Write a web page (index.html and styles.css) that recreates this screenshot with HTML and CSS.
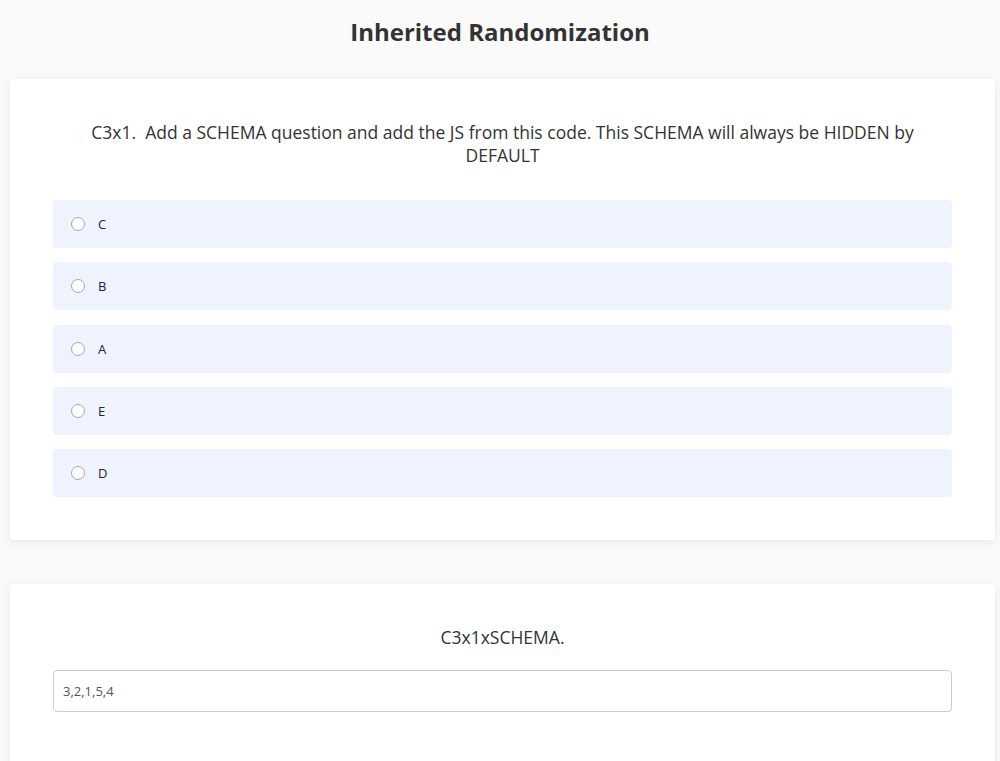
FILE: index.html
```html
<!DOCTYPE html>
<html>
<head>
	<title>Inherited Randomization</title>
	<link rel="stylesheet" href="styles.css">
</head>
<body>

	<h1 class="page-title">Inherited Randomization</h1>

	<!-- question 1 : radio list -->
	<div class="card">
		<div class="q-text">C3x1.&nbsp; Add a SCHEMA question and add the JS from this code. This SCHEMA will always be HIDDEN by DEFAULT</div>
		<div class="options">
			<label class="option"><span class="radio"></span><span class="opt-label">C</span></label>
			<label class="option"><span class="radio"></span><span class="opt-label">B</span></label>
			<label class="option"><span class="radio"></span><span class="opt-label">A</span></label>
			<label class="option"><span class="radio"></span><span class="opt-label">E</span></label>
			<label class="option"><span class="radio"></span><span class="opt-label">D</span></label>
		</div>
	</div>

	<!-- question 2 : schema text -->
	<div class="card card-schema">
		<div class="q-text">C3x1xSCHEMA.</div>
		<input class="text-input" type="text" value="3,2,1,5,4">
	</div>

</body>
</html>
```

FILE: styles.css
```css
* {
    box-sizing: border-box;
}

body {
    margin: 0;
    background: #fafafa;
    font-family: "Open Sans", "Noto Sans", sans-serif;
    color: #333;
}

.page-title {
    margin: 0;
    padding-top: 15px;
    height: 79px;
    text-align: center;
    font-size: 24px;
    font-weight: 700;
    color: #333;
}

.card {
    background: #fff;
    margin: 0 5px 44px 10px;
    padding: 42px 43px 43px 43px;
    border-radius: 4px;
    box-shadow: 0 2px 10px rgba(0, 0, 0, 0.08);
}

.q-text {
    text-align: center;
    font-size: 17.5px;
    line-height: 23px;
    color: #333;
    padding: 0 30px;
}

.options {
    display: flex;
    flex-direction: column;
    gap: 14.25px;
    margin-top: 33px;
}

.option {
    display: flex;
    align-items: center;
    height: 48px;
    padding-left: 18px;
    background: #eef3fe;
    border-radius: 4px;
    cursor: pointer;
}

.radio {
    width: 14px;
    height: 14px;
    border: 1px solid #a6a6a6;
    border-radius: 50%;
    background: #fff;
}

.opt-label {
    margin-left: 13px;
    font-size: 13px;
    color: #1c2340;
}

.card-schema {
    padding-top: 42px;
    height: 200px;
}

.card-schema .q-text {
    padding: 0;
}

.text-input {
    display: block;
    width: 100%;
    height: 42px;
    margin-top: 21px;
    padding: 0 9px;
    border: 1px solid #ccc;
    border-radius: 4px;
    font-family: "Open Sans", "Noto Sans", sans-serif;
    font-size: 13px;
    color: #555;
}
```
